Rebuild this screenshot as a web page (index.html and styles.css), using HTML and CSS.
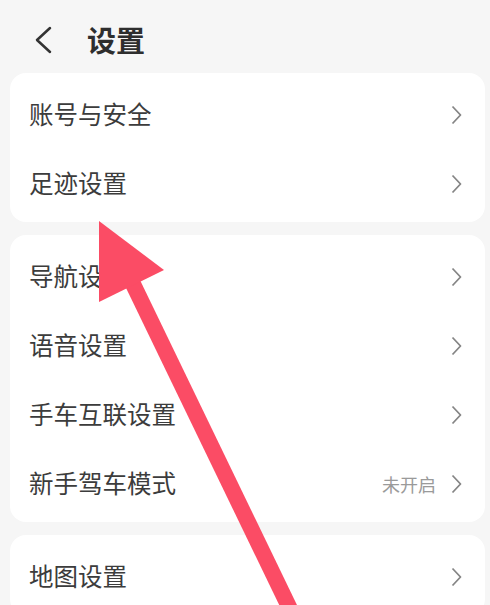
FILE: index.html
```html
<!DOCTYPE html>
<html lang="zh-CN">
<head>
<meta charset="utf-8">
<title>设置</title>
<link rel="stylesheet" href="styles.css">
</head>
<body>
<div class="page">
  <header class="header">
    <svg class="back" width="18" height="28" viewBox="0 0 18 28"><polyline points="16,2 3,14 16,26" fill="none" stroke="#333" stroke-width="2.5" stroke-linecap="round" stroke-linejoin="round"/></svg>
    <h1 class="title">设置</h1>
  </header>

  <section class="card">
    <div class="row"><span class="label">账号与安全</span><span class="right"><svg class="chev" width="11" height="20" viewBox="0 0 11 20"><polyline points="1.5,1.5 9.5,10 1.5,18.5" fill="none" stroke="#858585" stroke-width="1.8" stroke-linejoin="round"/></svg></span></div>
    <div class="row"><span class="label">足迹设置</span><span class="right"><svg class="chev" width="11" height="20" viewBox="0 0 11 20"><polyline points="1.5,1.5 9.5,10 1.5,18.5" fill="none" stroke="#858585" stroke-width="1.8" stroke-linejoin="round"/></svg></span></div>
  </section>

  <section class="card">
    <div class="row"><span class="label">导航设置</span><span class="right"><svg class="chev" width="11" height="20" viewBox="0 0 11 20"><polyline points="1.5,1.5 9.5,10 1.5,18.5" fill="none" stroke="#858585" stroke-width="1.8" stroke-linejoin="round"/></svg></span></div>
    <div class="row"><span class="label">语音设置</span><span class="right"><svg class="chev" width="11" height="20" viewBox="0 0 11 20"><polyline points="1.5,1.5 9.5,10 1.5,18.5" fill="none" stroke="#858585" stroke-width="1.8" stroke-linejoin="round"/></svg></span></div>
    <div class="row"><span class="label">手车互联设置</span><span class="right"><svg class="chev" width="11" height="20" viewBox="0 0 11 20"><polyline points="1.5,1.5 9.5,10 1.5,18.5" fill="none" stroke="#858585" stroke-width="1.8" stroke-linejoin="round"/></svg></span></div>
    <div class="row"><span class="label">新手驾车模式</span><span class="right"><span class="status">未开启</span><svg class="chev" width="11" height="20" viewBox="0 0 11 20"><polyline points="1.5,1.5 9.5,10 1.5,18.5" fill="none" stroke="#858585" stroke-width="1.8" stroke-linejoin="round"/></svg></span></div>
  </section>

  <section class="card">
    <div class="row"><span class="label">地图设置</span><span class="right"><svg class="chev" width="11" height="20" viewBox="0 0 11 20"><polyline points="1.5,1.5 9.5,10 1.5,18.5" fill="none" stroke="#858585" stroke-width="1.8" stroke-linejoin="round"/></svg></span></div>
  </section>

  <svg class="pointer" width="490" height="605" viewBox="0 0 490 605">
    <line x1="133" y1="284" x2="305" y2="640" stroke="#fb4c65" stroke-width="16"/>
    <polygon points="99,221 164,270 99,302" fill="#fb4c65"/>
  </svg>
</div>
</body>
</html>
```

FILE: styles.css
```css
html, body {
  margin: 0;
  padding: 0;
  background: #f6f6f6;
}
body {
  font-family: "Noto Sans CJK SC", "Noto Sans", sans-serif;
  color: #3c3c3c;
}
.page {
  position: relative;
  width: 490px;
  height: 605px;
  overflow: hidden;
}
.header {
  box-sizing: border-box;
  height: 73px;
  padding: 6px 0 0 34px;
  display: flex;
  align-items: center;
}
.back {
  display: block;
}
.title {
  margin: 0 0 0 35px;
  font-size: 29px;
  font-weight: 700;
  color: #2e2e2e;
  line-height: 1;
}
.card {
  margin: 0 5px 13px 10px;
  background: #fff;
  border-radius: 16px;
  padding: 7px 0 4px;
}
.row {
  height: 69px;
  display: flex;
  align-items: center;
  justify-content: space-between;
  padding: 0 23px 0 19px;
}
.label {
  font-size: 24.5px;
  line-height: 1;
  color: #3c3c3c;
}
.right {
  display: flex;
  align-items: center;
}
.status {
  font-size: 18px;
  color: #9a9a9a;
  margin-right: 15px;
  line-height: 1;
}
.chev {
  display: block;
}
.pointer {
  position: absolute;
  left: 0;
  top: 0;
  pointer-events: none;
}
```
